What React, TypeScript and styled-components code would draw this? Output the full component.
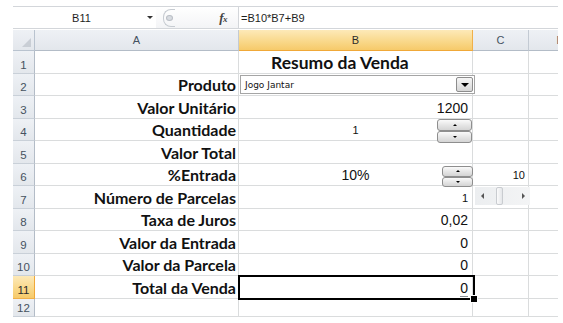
import React from "react";
import styled, { createGlobalStyle, css } from "styled-components";

const Global = createGlobalStyle`
  html, body { margin: 0; padding: 0; background: #ffffff; }
  body { font-family: "Liberation Sans", Arial, sans-serif; }
`;

const Page = styled.div`
  width: 545px;
  padding: 6px 0 0 13px;
`;

const FormulaBar = styled.div`
  display: flex;
  align-items: stretch;
  height: 23px;
  box-sizing: border-box;
  border-top: 1px solid #d3d6da;
  border-bottom: 1px solid #d3d6da;
  background: #ffffff;
`;

const NameBox = styled.div`
  width: 125px;
  display: flex;
  align-items: center;
  justify-content: center;
  font-size: 11px;
  color: #1e1e1e;
  padding-left: 6px;
`;

const NameArrow = styled.div`
  width: 12px;
  display: flex;
  align-items: center;
  justify-content: center;
  &::after {
    content: "";
    border-left: 3px solid transparent;
    border-right: 3px solid transparent;
    border-top: 3px solid #333;
  }
`;

const Middle = styled.div`
  width: 82px;
  display: flex;
  align-items: center;
  justify-content: space-between;
  padding: 0 11px 0 7px;
  box-sizing: border-box;
  background: linear-gradient(#ffffff, #f3f4f6);
`;

const Splitter = styled.div`
  width: 11px;
  height: 16px;
  border: 1px solid #c6cbd1;
  border-right: none;
  border-radius: 8px 0 0 8px;
  display: flex;
  align-items: center;
  justify-content: center;
  &::after {
    content: "";
    width: 5px;
    height: 4px;
    border-radius: 50%;
    background: #d8dce1;
    border: 1px solid #b9bec5;
  }
`;

const Fx = styled.div`
  font-family: "Liberation Serif", serif;
  font-style: italic;
  font-weight: bold;
  font-size: 13px;
  color: #444;
  letter-spacing: -0.5px;
  & > span { font-size: 9px; }
`;

const FormulaInput = styled.div`
  flex: 1;
  display: flex;
  align-items: center;
  padding-left: 2px;
  border-left: 1px solid #d3d6da;
  font-size: 11px;
  color: #1e1e1e;
`;

const Sheet = styled.div`
  position: relative;
  margin-top: 1px;
  display: grid;
  grid-template-columns: 22px 204px 234px 56px 64px;
  grid-template-rows: 21px repeat(11, 22.5px) 18.5px;
  width: 545px;
  height: 287px;
  overflow: hidden;
`;

const headerBase = css<{ $active?: boolean }>`
  box-sizing: border-box;
  display: flex;
  align-items: center;
  justify-content: center;
  font-family: "Liberation Sans", Arial, sans-serif;
  font-size: 11px;
  color: ${(p) => (p.$active ? "#2b2b2b" : "#45525f")};
  background: ${(p) =>
    p.$active
      ? "linear-gradient(#fde9b8, #f9d98c 55%, #f6ca6a)"
      : "linear-gradient(#eef1f5, #e3e7ec)"};
`;

const Corner = styled.div`
  box-sizing: border-box;
  background: linear-gradient(#eef1f5, #e3e7ec);
  border-right: 1px solid #b9c3cf;
  border-bottom: 1px solid #b9c3cf;
  position: relative;
  &::after {
    content: "";
    position: absolute;
    right: 3px;
    bottom: 3px;
    border-left: 9px solid transparent;
    border-bottom: 9px solid #c9ced5;
  }
`;

const ColHeader = styled.div<{ $active?: boolean }>`
  ${headerBase};
  border-right: 1px solid ${(p) => (p.$active ? "#f0b04a" : "#c3cad3")};
  border-bottom: 1px solid ${(p) => (p.$active ? "#f0a838" : "#b3bcc7")};
`;

const RowHeader = styled.div<{ $active?: boolean }>`
  ${headerBase};
  align-items: flex-end;
  padding-bottom: 2px;
  font-size: 11.5px;
  border-right: 1px solid ${(p) => (p.$active ? "#f0a838" : "#b3bcc7")};
  border-bottom: 1px solid ${(p) => (p.$active ? "#f0b04a" : "#c9d0d8")};
`;

const Cell = styled.div<{
  $align?: "left" | "center" | "right";
  $bold?: boolean;
  $title?: boolean;
  $small?: boolean;
  $pad?: number;
}>`
  box-sizing: border-box;
  border-right: 1px solid #dadcdd;
  border-bottom: 1px solid #dadcdd;
  display: flex;
  align-items: flex-end;
  justify-content: ${(p) =>
    p.$align === "right" ? "flex-end" : p.$align === "center" ? "center" : "flex-start"};
  padding: 0 ${(p) => (p.$align === "right" ? (p.$pad ?? 4) : 0)}px 1px
    ${(p) => (p.$align === "left" ? p.$pad ?? 2 : 0)}px;
  white-space: nowrap;
  overflow: visible;
  color: #111;
  line-height: 18px;
  font-family: ${(p) =>
    p.$bold ? "Lato, 'Open Sans', sans-serif" : "'Liberation Sans', Arial, sans-serif"};
  font-weight: ${(p) => (p.$bold ? 700 : 400)};
  font-size: ${(p) => (p.$title ? 17.5 : p.$bold ? 16 : p.$small ? 11 : 14)}px;
`;

const Underlined = styled.span`
  border-bottom: 1px solid #8a8f96;
  line-height: 15px;
`;

const Dropdown = styled.div`
  position: absolute;
  left: 227px;
  top: 45px;
  width: 235px;
  height: 19px;
  box-sizing: border-box;
  background: #fff;
  border: 1px solid #a5a5a5;
  display: flex;
  align-items: center;
  justify-content: space-between;
  padding: 0 1px 0 4px;
  font-family: "DejaVu Sans", sans-serif;
  font-size: 9px;
  color: #111;
`;

const DropButton = styled.div`
  width: 17px;
  height: 15px;
  box-sizing: border-box;
  border: 1px solid #8d8d8d;
  border-radius: 2px;
  background: linear-gradient(#f6f6f6, #d6d6d6);
  display: flex;
  align-items: center;
  justify-content: center;
  &::after {
    content: "";
    border-left: 4px solid transparent;
    border-right: 4px solid transparent;
    border-top: 4px solid #000;
  }
`;

const Spinner = styled.div<{ $left: number; $top: number; $w: number; $h: number }>`
  position: absolute;
  left: ${(p) => p.$left}px;
  top: ${(p) => p.$top}px;
  width: ${(p) => p.$w}px;
  height: ${(p) => p.$h}px;
  display: grid;
  grid-template-rows: 1fr 1fr;
`;

const SpinButton = styled.div<{ $down?: boolean }>`
  box-sizing: border-box;
  border: 1px solid #8e8e8e;
  border-radius: 3px;
  background: linear-gradient(#fafafa, #e6e6e6 50%, #d4d4d4);
  display: flex;
  align-items: center;
  justify-content: center;
  &::after {
    content: "";
    border-left: 2px solid transparent;
    border-right: 2px solid transparent;
    ${(p) =>
      p.$down ? "border-top: 2px solid #000;" : "border-bottom: 2px solid #000;"}
  }
`;

const ScrollBar = styled.div`
  position: absolute;
  left: 462px;
  top: 157px;
  width: 55px;
  height: 18px;
  background: linear-gradient(90deg, #eceef0, #f3f4f5);
  display: flex;
  align-items: center;
`;

const ScrollArrow = styled.div<{ $right?: boolean }>`
  width: 14px;
  height: 100%;
  display: flex;
  align-items: center;
  justify-content: center;
  &::after {
    content: "";
    border-top: 3px solid transparent;
    border-bottom: 3px solid transparent;
    ${(p) =>
      p.$right ? "border-left: 3px solid #555;" : "border-right: 3px solid #555;"}
  }
`;

const ScrollTrack = styled.div`
  flex: 1;
  height: 100%;
  display: flex;
  justify-content: flex-start;
  padding-left: 7px;
`;

const ScrollThumb = styled.div`
  width: 7px;
  height: 100%;
  box-sizing: border-box;
  border: 1px solid #c9ccd0;
  border-radius: 2px;
  background: linear-gradient(90deg, #fbfbfb, #e4e6e9);
`;

const Selection = styled.div`
  position: absolute;
  left: 225px;
  top: 245px;
  width: 237px;
  height: 25px;
  box-sizing: border-box;
  border: 2px solid #000;
  pointer-events: none;
`;

const FillHandle = styled.div`
  position: absolute;
  left: 458px;
  top: 266px;
  width: 6px;
  height: 6px;
  box-sizing: border-box;
  background: #000;
  outline: 1px solid #fff;
`;

type Row = {
  label?: string;
  b?: React.ReactNode;
  bAlign?: "left" | "center" | "right";
  bTitle?: boolean;
  bSmall?: boolean;
  bPad?: number;
  c?: string;
};

const rows: Row[] = [
  { b: "Resumo da Venda", bAlign: "left", bTitle: true, bPad: 32 },
  { label: "Produto" },
  { label: "Valor Unitário", b: "1200", bAlign: "right" },
  { label: "Quantidade", b: "1", bAlign: "center", bSmall: true },
  { label: "Valor Total" },
  { label: "%Entrada", b: "10%", bAlign: "center", c: "10" },
  { label: "Número de Parcelas", b: "1", bAlign: "right", bSmall: true },
  { label: "Taxa de Juros", b: "0,02", bAlign: "right" },
  { label: "Valor da Entrada", b: "0", bAlign: "right" },
  { label: "Valor da Parcela", b: "0", bAlign: "right" },
  { label: "Total da Venda", b: <Underlined>0</Underlined>, bAlign: "right" },
  {},
];

export default function App() {
  return (
    <>
      <Global />
      <Page>
        <FormulaBar>
          <NameBox>B11</NameBox>
          <NameArrow />
          <Middle>
            <Splitter />
            <Fx>
              f<span>x</span>
            </Fx>
          </Middle>
          <FormulaInput>=B10*B7+B9</FormulaInput>
        </FormulaBar>
        <Sheet>
          <Corner />
          <ColHeader>A</ColHeader>
          <ColHeader $active>B</ColHeader>
          <ColHeader>C</ColHeader>
          <ColHeader>D</ColHeader>
          {rows.map((r, i) => (
            <React.Fragment key={i}>
              <RowHeader $active={i === 10}>{i + 1}</RowHeader>
              <Cell $align="right" $bold $pad={2}>
                {r.label}
              </Cell>
              <Cell
                $align={r.bAlign}
                $bold={r.bTitle}
                $title={r.bTitle}
                $small={r.bSmall}
                $pad={r.bPad}
              >
                {r.b}
              </Cell>
              <Cell $align="right" $small $pad={3}>
                {r.c}
              </Cell>
              <Cell />
            </React.Fragment>
          ))}
          <Dropdown>
            <span>Jogo Jantar</span>
            <DropButton />
          </Dropdown>
          <Spinner $left={424} $top={89} $w={35} $h={24}>
            <SpinButton />
            <SpinButton $down />
          </Spinner>
          <Spinner $left={429} $top={136} $w={31} $h={21}>
            <SpinButton />
            <SpinButton $down />
          </Spinner>
          <ScrollBar>
            <ScrollArrow />
            <ScrollTrack>
              <ScrollThumb />
            </ScrollTrack>
            <ScrollArrow $right />
          </ScrollBar>
          <Selection />
          <FillHandle />
        </Sheet>
      </Page>
    </>
  );
}
